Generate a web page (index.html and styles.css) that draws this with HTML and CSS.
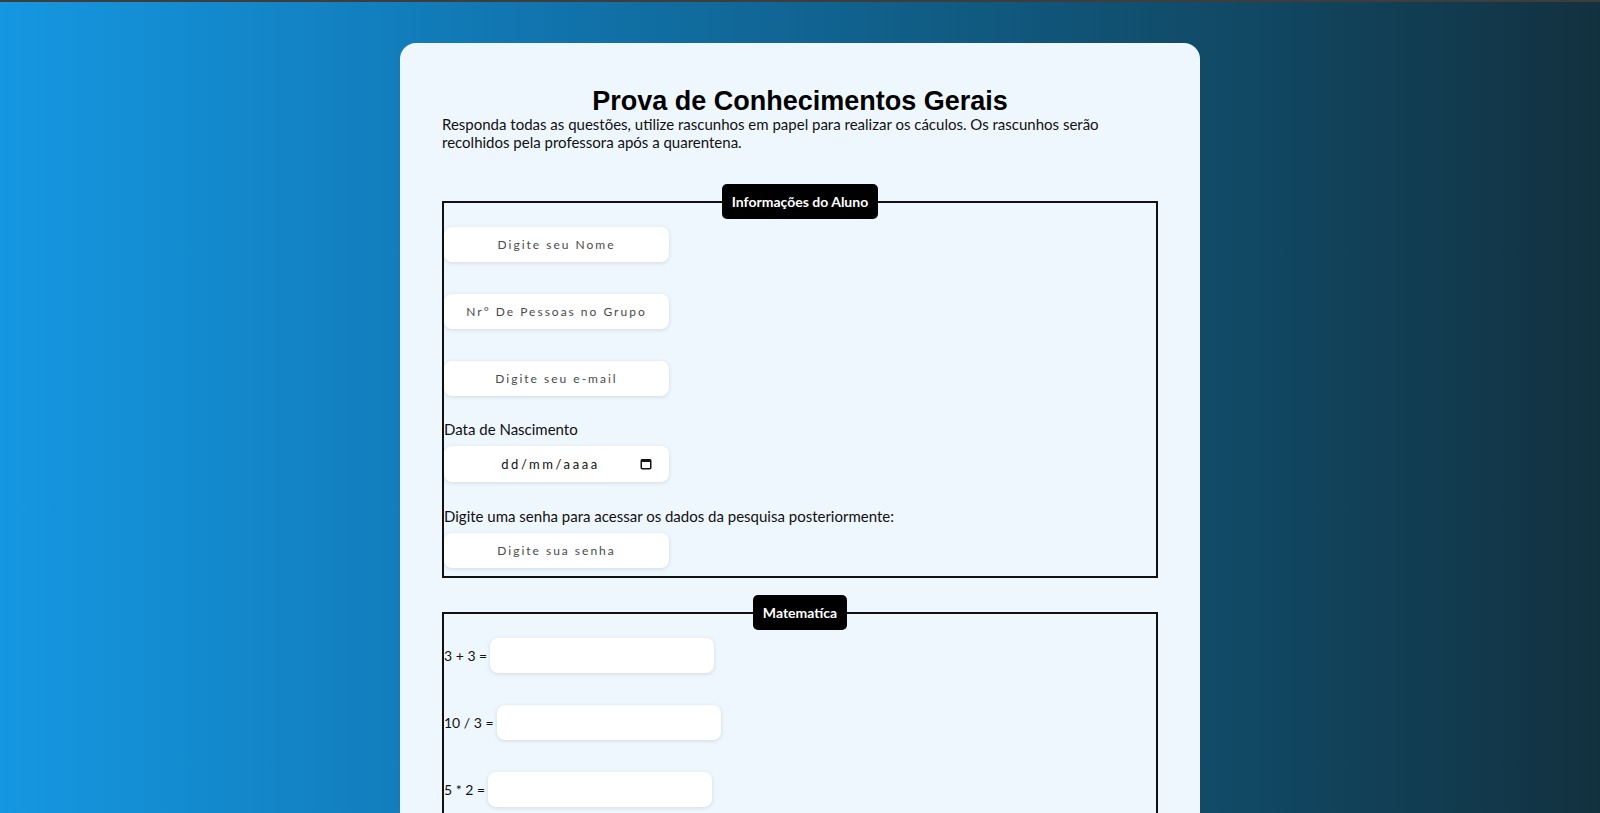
FILE: index.html
```html
<!DOCTYPE html>
<html lang="pt-BR">
<head>
<meta charset="utf-8">
<title>Prova de Conhecimentos Gerais</title>
<link rel="stylesheet" href="styles.css">
</head>
<body>
<main class="card">
  <h1 class="title">Prova de Conhecimentos Gerais</h1>
  <p class="intro">Responda todas as questões, utilize rascunhos em papel para realizar os cáculos. Os rascunhos serão recolhidos pela professora após a quarentena.</p>

  <fieldset class="group">
    <legend class="legend">Informações do Aluno</legend>
    <div class="fields">
      <input class="field first" type="text" placeholder="Digite seu Nome">
      <input class="field spaced" type="number" placeholder="Nr° De Pessoas no Grupo">
      <input class="field spaced" type="email" placeholder="Digite seu e-mail">
      <label class="label label-first">Data de Nascimento</label>
      <div class="field date-field near">
        <span class="date-text">dd/mm/aaaa</span>
        <svg class="cal-icon" width="12" height="12" viewBox="0 0 12 12" aria-hidden="true">
          <rect x="1.25" y="1.75" width="9.5" height="9" rx="1" fill="none" stroke="#111" stroke-width="1.5"/>
          <rect x="1" y="1.5" width="10" height="2.5" fill="#111"/>
        </svg>
      </div>
      <label class="label label-next">Digite uma senha para acessar os dados da pesquisa posteriormente:</label>
      <input class="field near" type="password" placeholder="Digite sua senha">
    </div>
  </fieldset>

  <fieldset class="group group-second">
    <legend class="legend">Matematíca</legend>
    <div class="fields">
      <div class="math-row first"><span class="math-label">3 + 3 =</span><input class="field math-input" type="text"></div>
      <div class="math-row spaced"><span class="math-label">10 / 3 =</span><input class="field math-input" type="text"></div>
      <div class="math-row spaced"><span class="math-label">5 * 2 =</span><input class="field math-input" type="text"></div>
    </div>
  </fieldset>
</main>
</body>
</html>
```

FILE: styles.css
```css
html, body {
  margin: 0;
  padding: 0;
}

body {
  min-height: 100vh;
  border-top: 2px solid #3d3d3d;
  background: linear-gradient(to right, #1597e1 0%, #1178b4 30%, #105b82 60%, #12313f 100%);
  font-family: "Lato", "Noto Sans", sans-serif;
  color: #111;
  overflow: hidden;
}

.card {
  box-sizing: border-box;
  width: 800px;
  margin: 41px auto 0;
  padding: 43px 42px 40px;
  background: #eff7fe;
  border-radius: 16px;
  min-height: 900px;
}

.title {
  margin: 0;
  font-family: "Liberation Sans", Arial, sans-serif;
  font-weight: 700;
  font-size: 27px;
  line-height: 30px;
  text-align: center;
  color: #000;
}

.intro {
  margin: 0;
  max-width: 670px;
  font-size: 15px;
  line-height: 17.5px;
  color: #111;
}

.group {
  margin: 33px 0 0;
  padding: 0 0 8px;
  border: 2px solid #111;
  min-width: 0;
}

.group-second {
  margin-top: 17px;
}

.legend {
  margin: 0 auto;
  padding: 0 10px;
  height: 35px;
  line-height: 35px;
  background: #000;
  color: #fff;
  border-radius: 5px;
  font-size: 14px;
  font-weight: 700;
}

.fields {
  display: flex;
  flex-direction: column;
  align-items: flex-start;
}

.field {
  box-sizing: border-box;
  width: 225px;
  height: 35px;
  border: none;
  border-radius: 8px;
  background: #fff;
  box-shadow: 0 1px 4px rgba(0, 0, 0, 0.12);
  font-family: "Lato", "Noto Sans", sans-serif;
  font-size: 12px;
  letter-spacing: 2px;
  text-align: center;
  color: #222;
  outline: none;
}

.field::placeholder {
  color: #4a4a4a;
}

.field::-webkit-outer-spin-button,
.field::-webkit-inner-spin-button {
  -webkit-appearance: none;
  margin: 0;
}

.first {
  margin-top: 8px;
}

.spaced {
  margin-top: 32px;
}

.near {
  margin-top: 8px;
}

.label {
  font-size: 15px;
  line-height: 18px;
  color: #111;
}

.label-first {
  margin-top: 24px;
}

.label-next {
  margin-top: 25px;
}

.date-field {
  position: relative;
  display: flex;
  align-items: center;
  justify-content: center;
  height: 36px;
}

.date-text {
  color: #111;
  font-size: 13px;
  letter-spacing: 2.6px;
  margin-left: -12px;
}

.cal-icon {
  position: absolute;
  right: 17px;
  top: 12px;
}

.math-row {
  display: flex;
  align-items: center;
  gap: 3px;
}

.math-label {
  font-size: 14px;
  line-height: 18px;
  color: #111;
}

.math-input {
  width: 224px;
}
```
